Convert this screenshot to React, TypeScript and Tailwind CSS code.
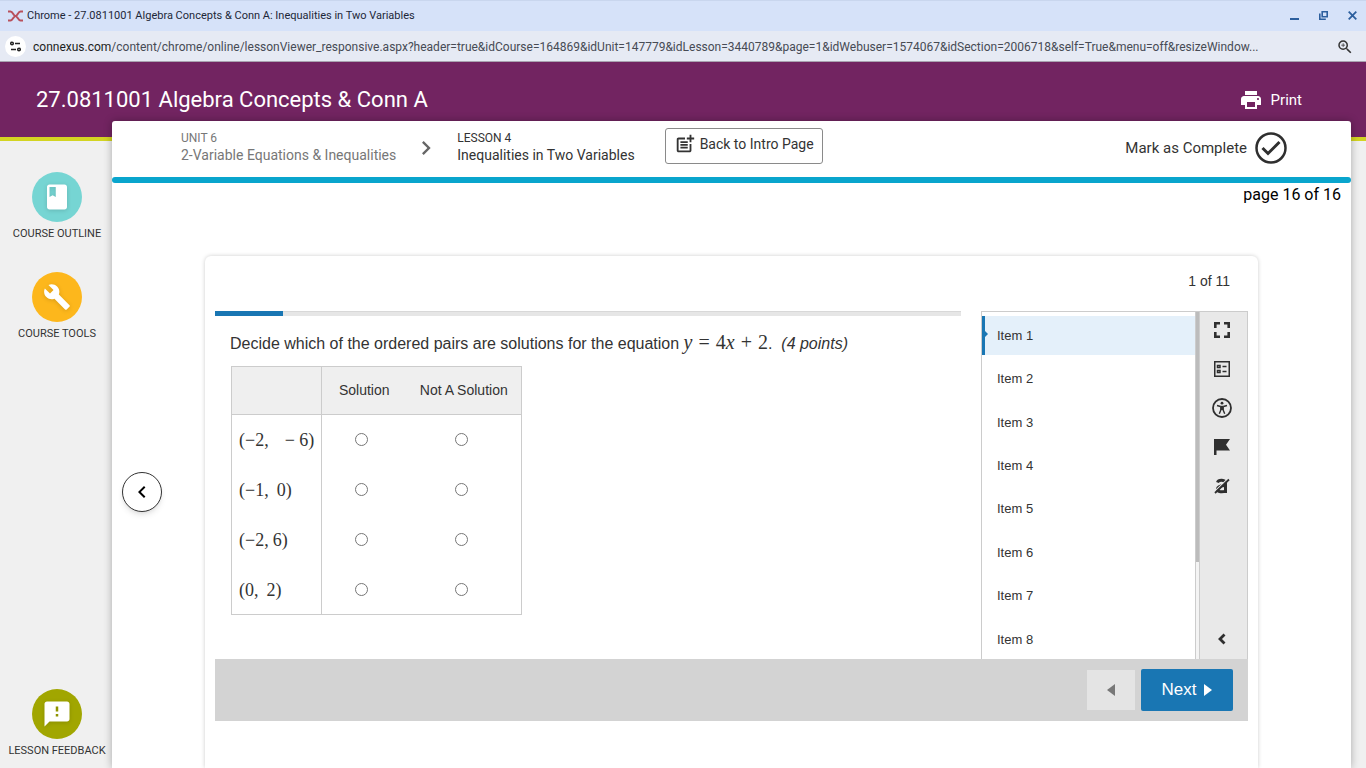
import React, { useState } from 'react';
import {
  MdBuild,
  MdChevronLeft,
  MdChevronRight,
  MdClass,
  MdFeedback,
  MdPostAdd,
  MdPrint,
  MdZoomIn,
} from 'react-icons/md';

const ITEMS = ['Item 1', 'Item 2', 'Item 3', 'Item 4', 'Item 5', 'Item 6', 'Item 7', 'Item 8'];

const PAIRS = [
  { id: 'a', label: '(-2, -6)', math: ['(−2,', '− 6)'], space: 'gap-4' },
  { id: 'b', label: '(-1, 0)', math: ['(−1,', '0)'], space: 'gap-2' },
  { id: 'c', label: '(-2, 6)', math: ['(−2,', '6)'], space: 'gap-1' },
  { id: 'd', label: '(0, 2)', math: ['(0,', '2)'], space: 'gap-2' },
];

function WindowBar() {
  return (
    <div className="h-[31px] bg-[#d6e2f9] border-t border-[#c9d6ee] flex items-center pl-2 pr-[9px] text-[#1d2738]">
      <svg width="15" height="12" viewBox="0 0 15 12" fill="none" stroke="#b8505c" strokeWidth="2">
        <path d="M0 1.500h2.500C5 1.500 5.500 6 7.500 6S10 1.500 12.500 1.500H15M0 10.500h2.500C5 10.500 5.500 6 7.500 6s2.500 4.500 5 4.500H15" />
      </svg>
      <span className="ml-1 flex-1 text-[11px] whitespace-nowrap">
        Chrome - 27.0811001 Algebra Concepts &amp; Conn A: Inequalities in Two Variables
      </span>
      <div className="flex items-center gap-5 pb-[2px] text-[#2d5f9e]">
        <button aria-label="Minimize">
          <svg width="9" height="10" viewBox="0 0 9 10" fill="currentColor">
            <path d="M0 8h9v2H0z" />
          </svg>
        </button>
        <button aria-label="Restore">
          <svg width="9" height="9" viewBox="0 0 9 9" fill="none" stroke="currentColor" strokeWidth="1.600">
            <path d="M3.200.8h5v5h-5zM.8 2.500v5.700h6" />
          </svg>
        </button>
        <button aria-label="Close">
          <svg width="9" height="9" viewBox="0 0 9 9" fill="none" stroke="currentColor" strokeWidth="1.800">
            <path d="M.7.7l7.600 7.600M8.300.7L.7 8.300" />
          </svg>
        </button>
      </div>
    </div>
  );
}

function AddressBar() {
  return (
    <div className="h-[31px] bg-[#e6eaf4] border-b border-[#a9a3b0] flex items-center pt-px pl-[5px] pr-3">
      <button aria-label="Site information" className="size-[21px] rounded-full bg-white flex items-center justify-center shrink-0">
        <svg width="11" height="11" viewBox="0 0 11 11" fill="none" stroke="#222" strokeWidth="1.500">
          <circle cx="2" cy="2.500" r="1.300" />
          <circle cx="9" cy="8.500" r="1.300" />
          <path d="M5 2.500h5M1 8.500h5" />
        </svg>
      </button>
      <span className="ml-[7px] flex-1 min-w-0 truncate text-[12px] text-[#474b54]">
        <span className="text-[#1c1e22]">connexus.com</span>
        /content/chrome/online/lessonViewer_responsive.aspx?header=true&amp;idCourse=164869&amp;idUnit=147779&amp;idLesson=3440789&amp;page=1&amp;idWebuser=1574067&amp;idSection=2006718&amp;self=True&amp;menu=off&amp;resizeWindow...
      </span>
      <MdZoomIn className="ml-3 size-[18px] text-[#333]" />
    </div>
  );
}

interface SideLinkProps {
  label: string;
  color: string;
  children: React.ReactNode;
}

function SideLink({ label, color, children }: SideLinkProps) {
  return (
    <a href="#" className="flex flex-col items-center text-[11px] leading-4 text-[#333] whitespace-nowrap">
      <span className={`size-[50px] rounded-full flex items-center justify-center text-white ${color}`}>
        {children}
      </span>
      <span className="mt-1">{label}</span>
    </a>
  );
}

function LessonBar() {
  return (
    <div className="h-14 pb-[2px] flex items-center pl-[69px] pr-16 text-[14px] leading-[17px] text-[#333] whitespace-nowrap">
      <a href="#" className="mb-[2px] text-[#777]">
        <div className="text-[12px]">UNIT 6</div>
        <div>2-Variable Equations &amp; Inequalities</div>
      </a>
      <MdChevronRight className="ml-4 mr-[17px] size-7 text-[#666]" />
      <div className="mb-[2px]">
        <div className="text-[12px]">LESSON 4</div>
        <div>Inequalities in Two Variables</div>
      </div>
      <button className="ml-[30px] mb-1 h-9 px-2 pb-1 flex items-center gap-1 border border-[#8a8a8a] rounded-[3px]">
        <MdPostAdd className="size-[22px]" />
        Back to Intro Page
      </button>
      <button className="ml-auto flex items-center gap-2 text-[15px]">
        Mark as Complete
        <svg width="32" height="32" viewBox="0 0 32 32" fill="none" stroke="#2f2f2f">
          <circle cx="16" cy="16" r="14.500" strokeWidth="2.500" />
          <path d="M7.500 16l5.500 5.500L24.500 10" strokeWidth="3" />
        </svg>
      </button>
    </div>
  );
}

function QuestionTable() {
  const [answers, setAnswers] = useState<Record<string, string>>({});

  return (
    <table className="mt-[10px] ml-4 border-collapse border border-[#ccc] text-[14px] text-[#333]">
      <thead className="bg-[#efefef]">
        <tr className="h-12 border-b border-[#ccc]">
          <th className="w-[90px] border-r border-[#ccc]" aria-label="Ordered pair" />
          <th className="w-[85px] font-normal">Solution</th>
          <th className="w-[115px] font-normal">Not A Solution</th>
        </tr>
      </thead>
      <tbody>
        {PAIRS.map((pair) => (
          <tr key={pair.id} className="h-[50px]">
            <th className="pl-[7px] pt-[2px] border-r border-[#ccc] text-left font-normal font-['Liberation_Serif',serif] text-[18px] whitespace-nowrap">
              <span className={`flex ${pair.space}`}>
                {pair.math.map((part) => (
                  <span key={part}>{part}</span>
                ))}
              </span>
            </th>
            {['Solution', 'Not A Solution'].map((choice) => (
              <td key={choice} className="pr-[5px]">
                <input
                  type="radio"
                  name={pair.id}
                  aria-label={`${pair.label} ${choice}`}
                  checked={answers[pair.id] === choice}
                  onChange={() => setAnswers((prev) => ({ ...prev, [pair.id]: choice }))}
                  className="block mx-auto size-[13px]"
                />
              </td>
            ))}
          </tr>
        ))}
      </tbody>
    </table>
  );
}

function ItemList() {
  const [active, setActive] = useState(0);

  return (
    <div className="w-[218px] flex border-t border-l border-[#ccc]">
      <ul className="flex-1 pt-1 flex flex-col justify-between text-[13px] text-[#333]">
        {ITEMS.map((item, i) => (
          <li key={item}>
            <button
              onClick={() => setActive(i)}
              className={`relative w-full h-[39px] pl-3 text-left border-l-3 ${
                i === active ? 'bg-[#e4f0fa] border-[#1976b3]' : 'border-transparent'
              }`}
            >
              {i === active && (
                <svg className="absolute left-0 top-[15px]" width="3" height="6" viewBox="0 0 3 6" fill="#1976b3">
                  <path d="M0 0l3 3-3 3z" />
                </svg>
              )}
              {item}
            </button>
          </li>
        ))}
      </ul>
      <div className="w-1 bg-[#f4f4f4] border-l border-[#ccc]">
        <div className="h-[72%] bg-[#bcbcbc]" />
      </div>
    </div>
  );
}

function Toolbar() {
  return (
    <div className="w-[49px] flex flex-col items-center bg-[#e9e9e9] border border-b-0 border-[#ccc] pt-[2px] pr-1 text-[#2f2f2f]">
      <button aria-label="Full screen" className="h-[39px] flex items-center pb-2">
        <svg width="16" height="16" viewBox="0 0 16 16" fill="none" stroke="currentColor" strokeWidth="2.600">
          <path d="M1.300 6V1.300H6M10 1.300h4.700V6M14.700 10v4.700H10M6 14.700H1.300V10" />
        </svg>
      </button>
      <button aria-label="Answer choices" className="h-[39px] flex items-center pb-2">
        <svg width="16" height="16" viewBox="0 0 16 16" fill="none" stroke="currentColor" strokeWidth="1.500">
          <path d="M.75.75h14.500v14.500H.75zM8.500 5.500h4M8.500 10.500h4" />
          <path d="M3.500 4.500h2.500v2H3.500zM3.500 9.500h2.500v2H3.500z" />
        </svg>
      </button>
      <button aria-label="Accessibility" className="h-[39px] flex items-center pb-2">
        <svg width="20" height="20" viewBox="0 0 20 20" fill="none" stroke="currentColor">
          <circle cx="10" cy="10" r="9" strokeWidth="1.800" />
          <circle cx="10" cy="5.200" r="1.400" fill="currentColor" stroke="none" />
          <path d="M5 7.500l3.500 1M15 7.500l-3.500 1M9 8.500v3L7.300 15.800M11 8.500v3l1.700 4.300" strokeWidth="1.400" />
          <path d="M8.300 7.800h3.400v4.200H8.300z" fill="currentColor" stroke="none" />
        </svg>
      </button>
      <button aria-label="Flag item" className="h-[39px] flex items-center pb-2">
        <svg width="16" height="16" viewBox="0 0 16 16" fill="currentColor">
          <path d="M0 0h16l-4 5.700 4 5.700H2.500V16H0z" />
        </svg>
      </button>
      <button aria-label="Clear strikethrough" className="h-[39px] flex items-center pb-2">
        <svg width="16" height="16" viewBox="0 0 16 16" fill="none" stroke="currentColor">
          <path d="M3.500 4.500C4.500 1.500 11.500 1.200 11.500 5.500V15" strokeWidth="3" />
          <path d="M11 7.500C6 7.500 3.500 9 3.500 11.500s5 3 8 1.500" strokeWidth="3" />
          <path d="M0 14L13 1.500" stroke="#e9e9e9" strokeWidth="1.200" />
          <path d="M1 15L15 1.500" strokeWidth="1.800" />
        </svg>
      </button>
      <button aria-label="Collapse item list" className="mt-auto mb-[14px]">
        <svg width="8" height="12" viewBox="0 0 8 12" fill="none" stroke="currentColor" strokeWidth="2.800">
          <path d="M6.500 1.500L2 6l4.500 4.500" />
        </svg>
      </button>
    </div>
  );
}

function Quiz() {
  return (
    <section className="flex-1 min-w-0 px-[10px] pt-[15px] bg-white rounded-t-md shadow-[0_0_4px_rgba(0,0,0,0.2)] font-['Liberation_Sans',Arial,sans-serif]">
      <div className="h-10 pr-[18px] text-right text-[14px] leading-5 text-[#333]">1 of 11</div>
      <div className="flex min-h-[348px]">
        <div className="flex-1 min-w-0 mr-5">
          <div className="h-[5px] bg-[#e6e6e6] border-t border-[#d8d8d8]">
            <div className="h-[5px] w-1/11 -mt-px min-w-[68px] bg-[#1976b3]" />
          </div>
          <p className="mt-[14px] ml-[15px] text-[16px] leading-6 text-[#333]">
            Decide which of the ordered pairs are solutions for the equation{' '}
            <span className="inline-flex gap-[6px] font-['Liberation_Serif',serif] text-[20px] leading-6">
              <i>y</i>
              <span>=</span>
              <span>
                4<i>x</i>
              </span>
              <span>+</span>
              <span>2</span>
            </span>
            .&nbsp; <em>(4 points)</em>
          </p>
          <QuestionTable />
        </div>
        <ItemList />
        <Toolbar />
      </div>
      <div className="h-[62px] px-[15px] flex items-center justify-end gap-[6px] bg-[#d3d3d3]">
        <button disabled aria-label="Previous" className="w-12 h-10 flex items-center justify-center bg-[#e4e4e4] text-[#777]">
          <svg width="8" height="12" viewBox="0 0 8 12" fill="currentColor">
            <path d="M8 0v12L0 6z" />
          </svg>
        </button>
        <button className="w-[92px] h-[42px] flex items-center justify-center gap-2 bg-[#1976b3] rounded-xs text-white text-[17px]">
          Next
          <svg width="8" height="12" viewBox="0 0 8 12" fill="currentColor">
            <path d="M0 0v12l8-6z" />
          </svg>
        </button>
      </div>
    </section>
  );
}

function App() {
  return (
    <div className="min-h-screen flex flex-col bg-[#f0f0f0] font-[Roboto,sans-serif]">
      <WindowBar />
      <AddressBar />
      <header className="h-[79px] pl-9 pr-16 flex justify-between bg-[#722461] border-b-4 border-[#d3d422] text-white">
        <h1 className="pt-5 text-[22px] leading-9">27.0811001 Algebra Concepts &amp; Conn A</h1>
        <button className="h-9 mt-5 flex items-center gap-2 text-[15px]">
          <MdPrint className="size-6" />
          Print
        </button>
      </header>

      <div className="flex-1 flex">
        <nav className="w-28 pl-[2px] pt-[31px] pb-[9px] flex flex-col gap-[30px] shrink-0">
          <SideLink label="COURSE OUTLINE" color="bg-[#76d5d3]">
            <MdClass className="size-[30px] drop-shadow-sm" />
          </SideLink>
          <SideLink label="COURSE TOOLS" color="bg-[#fdb71c]">
            <MdBuild className="size-7 drop-shadow-sm" />
          </SideLink>
          <div className="mt-auto">
            <SideLink label="LESSON FEEDBACK" color="bg-[#a1a600]">
              <MdFeedback className="size-[30px] drop-shadow-sm" />
            </SideLink>
          </div>
        </nav>

        <main className="flex-1 min-w-0 -mt-5 mr-[15px] flex flex-col bg-white rounded-t-[3px] shadow-[0_0_8px_rgba(0,0,0,0.3)] relative">
          <LessonBar />
          <div className="h-[6px] rounded-full bg-[#09a5cd]" />
          <div className="pr-[10px] text-right text-[16px] leading-6 text-black">page 16 of 16</div>
          <div className="flex-1 mt-[49px] flex">
            <div className="w-[93px] pl-[10px] shrink-0">
              <button
                aria-label="Previous page"
                className="mt-[216px] size-10 flex items-center justify-center rounded-full bg-white border border-[#333] shadow-md text-black"
              >
                <MdChevronLeft className="size-6" />
              </button>
            </div>
            <Quiz />
            <div className="w-[93px] shrink-0" />
          </div>
        </main>
      </div>
    </div>
  );
}

export default App;
